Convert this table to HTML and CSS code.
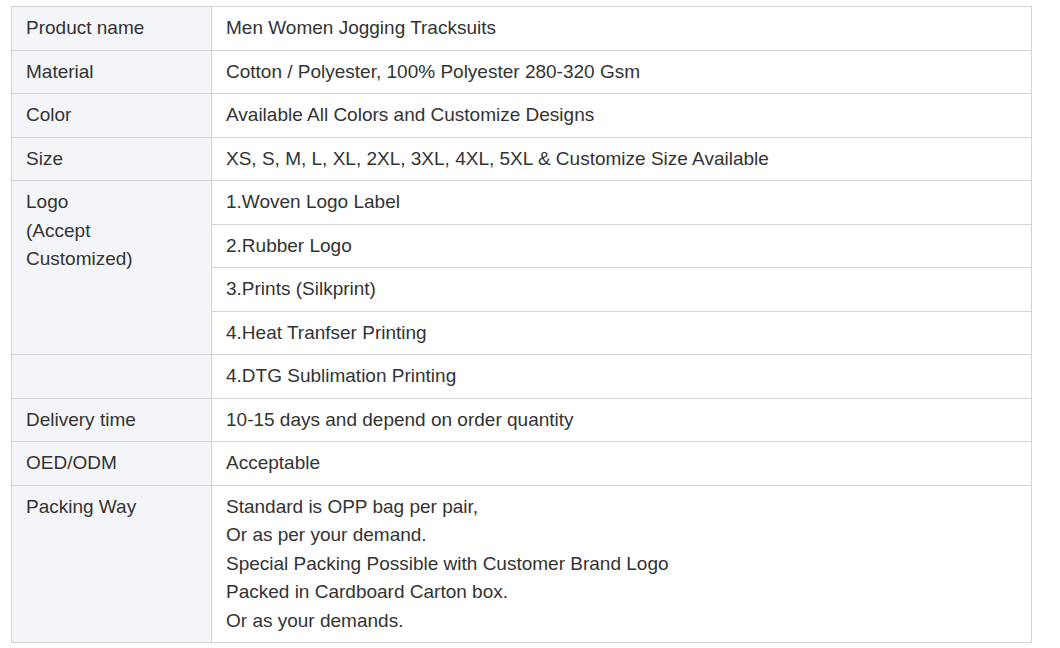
FILE: index.html
```html
<!DOCTYPE html>
<html>
<head>
<meta charset="utf-8">
<link rel="stylesheet" href="styles.css">
</head>
<body>
<div class="wrap">
<table class="spec">
  <tr><th>Product name</th><td>Men Women Jogging Tracksuits</td></tr>
  <tr><th>Material</th><td>Cotton / Polyester, 100% Polyester 280-320 Gsm</td></tr>
  <tr><th>Color</th><td>Available All Colors and Customize Designs</td></tr>
  <tr><th>Size</th><td>XS, S, M, L, XL, 2XL, 3XL, 4XL, 5XL &amp; Customize Size Available</td></tr>
  <tr><th rowspan="4">Logo<br>(Accept<br>Customized)</th><td>1.Woven Logo Label</td></tr>
  <tr><td>2.Rubber Logo</td></tr>
  <tr><td>3.Prints (Silkprint)</td></tr>
  <tr><td>4.Heat Tranfser Printing</td></tr>
  <tr><th></th><td>4.DTG Sublimation Printing</td></tr>
  <tr><th>Delivery time</th><td>10-15 days and depend on order quantity</td></tr>
  <tr><th>OED/ODM</th><td>Acceptable</td></tr>
  <tr><th>Packing Way</th><td>Standard is OPP bag per pair,<br>Or as per your demand.<br>Special Packing Possible with Customer Brand Logo<br>Packed in Cardboard Carton box.<br>Or as your demands.</td></tr>
</table>
</div>
</body>
</html>
```

FILE: styles.css
```css
html, body {
  margin: 0;
  padding: 0;
  background: #ffffff;
}
.wrap {
  padding: 6px 0 0 11px;
}
.spec {
  border-collapse: collapse;
  width: 1021px;
  font-family: "Liberation Sans", Arial, sans-serif;
  font-size: 19px;
  line-height: 28.5px;
  color: #333333;
}
.spec th, .spec td {
  border: 1px solid #d3d3d6;
  padding: 7px 14px;
  text-align: left;
  vertical-align: top;
  font-weight: normal;
}
.spec th {
  width: 171px;
  background: #f4f5f8;
}
.spec td {
  background: #ffffff;
}
```
